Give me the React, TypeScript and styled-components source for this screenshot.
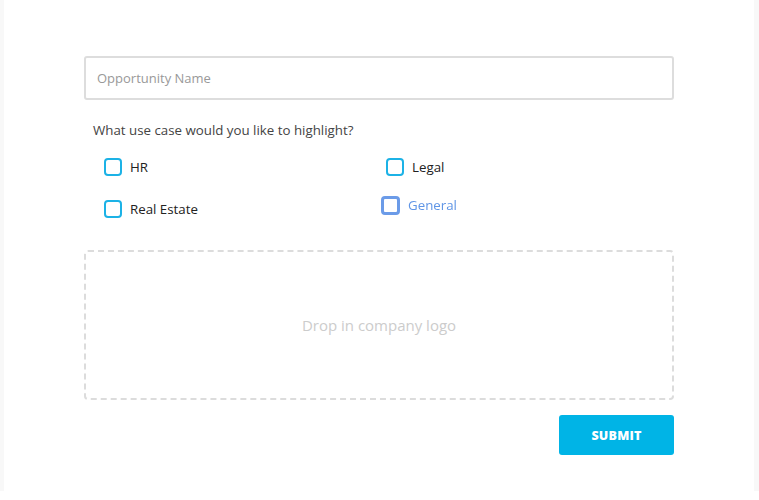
import React from "react";
import styled, { createGlobalStyle } from "styled-components";

const Global = createGlobalStyle`
  html, body { margin: 0; padding: 0; background: #ffffff; }
  body { font-family: "Open Sans", "Liberation Sans", sans-serif; }
  * { box-sizing: border-box; }
`;

const Page = styled.div`
  background: #f8f8f8;
  height: 491px;
  padding: 0 5px 0 4px;
`;

const Card = styled.div`
  background: #ffffff;
  height: 100%;
  padding: 56px 0 0 80px;
`;

const Form = styled.form`
  width: 590px;
  display: flex;
  flex-direction: column;
`;

const Input = styled.input`
  height: 44px;
  width: 100%;
  border: 2px solid #dddddd;
  border-radius: 3px;
  padding: 0 11px;
  font-family: "Open Sans", sans-serif;
  font-size: 13px;
  color: #333;
  outline: none;
  &::placeholder { color: #999999; }
`;

const Question = styled.div`
  margin-top: 21px;
  padding-left: 9px;
  font-size: 13.3px;
  color: #444444;
  line-height: 18px;
`;

const Options = styled.div`
  display: grid;
  grid-template-columns: 282px 1fr;
  row-gap: 24px;
  padding-left: 20px;
  margin-top: 19px;
`;

const Option = styled.label<{ $ghost?: boolean }>`
  display: flex;
  align-items: center;
  gap: 8px;
  height: 18px;
  font-size: 13.3px;
  color: ${(p) => (p.$ghost ? "#5f95e6" : "#222222")};
  ${(p) => (p.$ghost ? "filter: blur(0.7px); transform: translate(-5px, -4px);" : "")}
`;

const Box = styled.span<{ $ghost?: boolean }>`
  width: ${(p) => (p.$ghost ? 19 : 18)}px;
  height: ${(p) => (p.$ghost ? 19 : 18)}px;
  border: ${(p) => (p.$ghost ? "3px solid #6b9be8" : "2px solid #1cb2e6")};
  border-radius: 4px;
  flex: none;
`;

const Drop = styled.div`
  margin-top: 32px;
  height: 150px;
  border: 2px dashed #dcdcdc;
  border-radius: 4px;
  display: flex;
  align-items: center;
  justify-content: center;
  font-size: 15px;
  color: #cccccc;
`;

const Actions = styled.div`
  display: flex;
  justify-content: flex-end;
  margin-top: 15px;
`;

const Submit = styled.button`
  width: 115px;
  height: 40px;
  border: none;
  border-radius: 3px;
  background: #00b4e6;
  color: #ffffff;
  font-family: "Open Sans", sans-serif;
  font-weight: 800;
  font-size: 12.5px;
  letter-spacing: 0.2px;
`;

export default function App() {
  return (
    <>
      <Global />
      <Page>
        <Card>
          <Form onSubmit={(e) => e.preventDefault()}>
            <Input placeholder="Opportunity Name" />
            <Question>What use case would you like to highlight?</Question>
            <Options>
              <Option><Box />HR</Option>
              <Option><Box />Legal</Option>
              <Option><Box />Real Estate</Option>
              <Option $ghost><Box $ghost />General</Option>
            </Options>
            <Drop>Drop in company logo</Drop>
            <Actions>
              <Submit type="submit">SUBMIT</Submit>
            </Actions>
          </Form>
        </Card>
      </Page>
    </>
  );
}
